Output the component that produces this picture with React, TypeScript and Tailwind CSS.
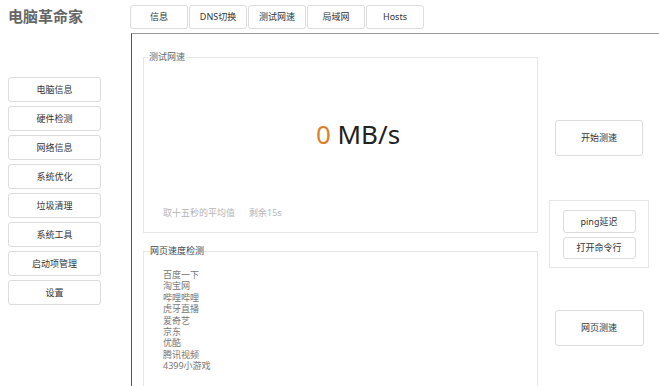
import React from "react";

const navItems = ["电脑信息", "硬件检测", "网络信息", "系统优化", "垃圾清理", "系统工具", "启动项管理", "设置"];
const tabs = ["信息", "DNS切换", "测试网速", "局域网", "Hosts"];
const sites = ["百度一下", "淘宝网", "哔哩哔哩", "虎牙直播", "爱奇艺", "京东", "优酷", "腾讯视频", "4399小游戏"];

const font = { fontFamily: '"Noto Sans", "Noto Sans CJK SC", sans-serif' };

export default function App() {
  return (
    <div className="flex h-[386px] w-[659px] overflow-hidden bg-white text-[#333]" style={font}>
      {/* sidebar */}
      <div className="w-[131px] shrink-0">
        <h1 className="pl-[8px] pt-[6px] text-[15px] font-bold leading-[20px] text-[#666]">电脑革命家</h1>
        <div className="mt-[51px] flex flex-col gap-[4px] pl-[8px]">
          {navItems.map((item) => (
            <button
              key={item}
              className="h-[25px] w-[93px] rounded-[3px] border border-[#dcdcdc] bg-white text-[9px] text-[#333]"
            >
              {item}
            </button>
          ))}
        </div>
      </div>

      {/* main */}
      <div className="flex flex-1 flex-col">
        <div className="-ml-[1px] flex gap-[1px] pt-[5px]">
          {tabs.map((tab) => (
            <button
              key={tab}
              className="h-[24px] w-[58px] rounded-[3px] border border-[#dcdcdc] bg-white text-[9px] text-[#333]"
            >
              {tab}
            </button>
          ))}
        </div>

        <div className="mt-[4px] flex flex-1 border-l border-t border-l-[#555] border-t-[#999] pl-[11px] pt-[17px]">
          <div className="w-[395px]">
            <fieldset className="h-[182px] border border-[#e6e6e6] px-0">
              <legend className="ml-[4px] px-[1px] text-[9px] leading-[12px] text-[#666]">测试网速</legend>
              <div className="mt-[56px] pl-[35px] text-center text-[26px] leading-[30px]">
                <span className="text-[#d9822b]">0</span> <span className="text-[#222]">MB/s</span>
              </div>
              <div className="mt-[58px] flex gap-[14px] pl-[19px] text-[9px] leading-[12px] text-[#b5b5b5]">
                <span>取十五秒的平均值</span>
                <span>剩余15s</span>
              </div>
            </fieldset>

            <fieldset className="mt-[12px] h-[160px] border border-[#e6e6e6] px-0">
              <legend className="ml-[6px] px-0 text-[9px] leading-[12px] text-[#444]">网页速度检测</legend>
              <ul className="mt-[12px] pl-[19px] text-[9px] leading-[11.4px] text-[#777]">
                {sites.map((s) => (
                  <li key={s}>{s}</li>
                ))}
              </ul>
            </fieldset>
          </div>

          <div className="ml-[11px] flex w-[100px] flex-col items-center">
            <button className="mt-[69px] h-[36px] w-[88px] rounded-[3px] border border-[#dcdcdc] bg-white text-[9px]">
              开始测速
            </button>
            <div className="mt-[44px] flex h-[68px] w-[100px] flex-col items-center gap-[4px] border border-[#e6e6e6] pt-[9px]">
              <button className="h-[23px] w-[73px] rounded-[3px] border border-[#dcdcdc] bg-white text-[9px]">
                ping延迟
              </button>
              <button className="h-[22px] w-[73px] rounded-[3px] border border-[#dcdcdc] bg-white text-[9px]">
                打开命令行
              </button>
            </div>
            <button className="mt-[42px] h-[36px] w-[89px] rounded-[3px] border border-[#dcdcdc] bg-white text-[9px]">
              网页测速
            </button>
          </div>
        </div>
      </div>
    </div>
  );
}
